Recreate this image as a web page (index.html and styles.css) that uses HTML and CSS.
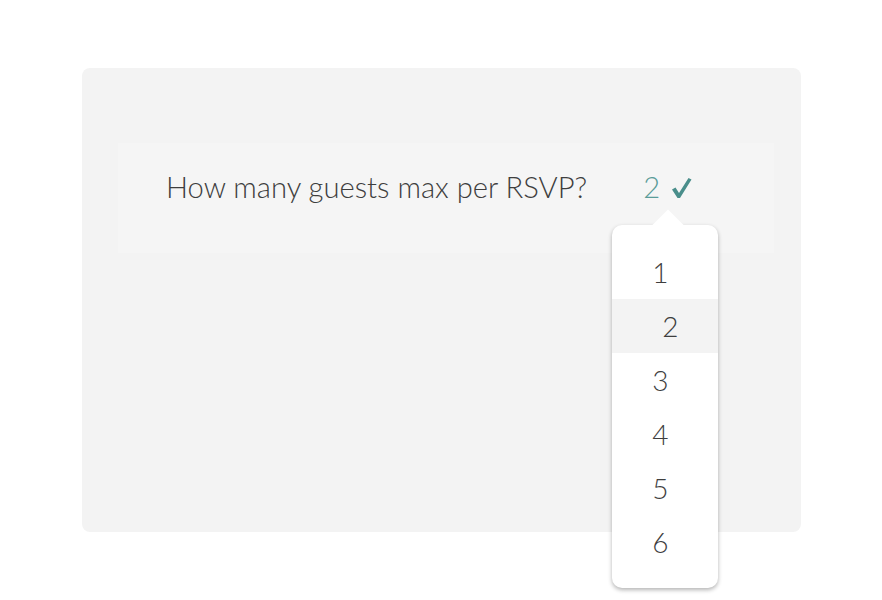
FILE: index.html
```html
<!DOCTYPE html>
<html>
<head>
<meta name="viewport" content="width=device-width, initial-scale=1">
<link rel="stylesheet" href="styles.css">
</head>
<body>

<div class="page">
  <div class="card">
    <div class="question-row">
      <span class="question">How many guests max per RSVP?</span>
      <span class="picker">
        <span class="picker-value">2</span>
        <svg class="picker-check" width="21" height="22" viewBox="0 0 21 22">
          <path d="M1 12.5 L4.5 10.5 L8 16 L17.5 1 L20.5 2.5 L9 21 L6.5 21 Z" fill="#4a8e8b"/>
        </svg>
        <ul class="dropdown">
          <li>1</li>
          <li class="active">2</li>
          <li>3</li>
          <li>4</li>
          <li>5</li>
          <li>6</li>
        </ul>
      </span>
    </div>
  </div>
</div>

</body>
</html>
```

FILE: styles.css
```css
body {
  font-family: "Lato Light", Lato, "Open Sans", sans-serif;
  font-weight: 300;
  margin: 0;
  background: #fff;
  color: #3e3e3e;
}

html {
  box-sizing: border-box;
}

*, *:before, *:after {
  box-sizing: inherit;
}

.page {
  min-height: 600px;
  padding: 68px 0 0 82px;
}

.card {
  width: 719px;
  height: 464px;
  background-color: #f3f3f3;
  border-radius: 8px;
  padding: 75px 27px 0 36px;
}

.question-row {
  height: 110px;
  background-color: #f5f5f5;
  padding: 27px 0 0 48px;
  display: flex;
  align-items: flex-start;
  font-size: 29.2px;
  line-height: 34px;
}

.picker {
  position: relative;
  margin-left: 56px;
  display: flex;
  align-items: center;
}

.picker-value {
  color: #5a9c99;
}

.picker-check {
  margin-left: 11px;
  margin-top: 2px;
}

.dropdown {
  position: absolute;
  top: 55px;
  left: -31px;
  width: 106px;
  margin: 0;
  padding: 20px 0 19px;
  list-style: none;
  background: #fff;
  border-radius: 10px;
  box-shadow: 0 2px 4px rgba(0, 0, 0, 0.3);
  font-size: 28px;
  z-index: 2;
}

.dropdown::before {
  content: "";
  position: absolute;
  top: -11px;
  left: 45px;
  width: 22px;
  height: 22px;
  background: #fff;
  transform: rotate(45deg);
}

.dropdown li {
  position: relative;
  height: 54px;
  line-height: 54px;
  padding-left: 40px;
}

.dropdown li.active {
  background: #f3f3f3;
  padding-left: 50px;
}
```
